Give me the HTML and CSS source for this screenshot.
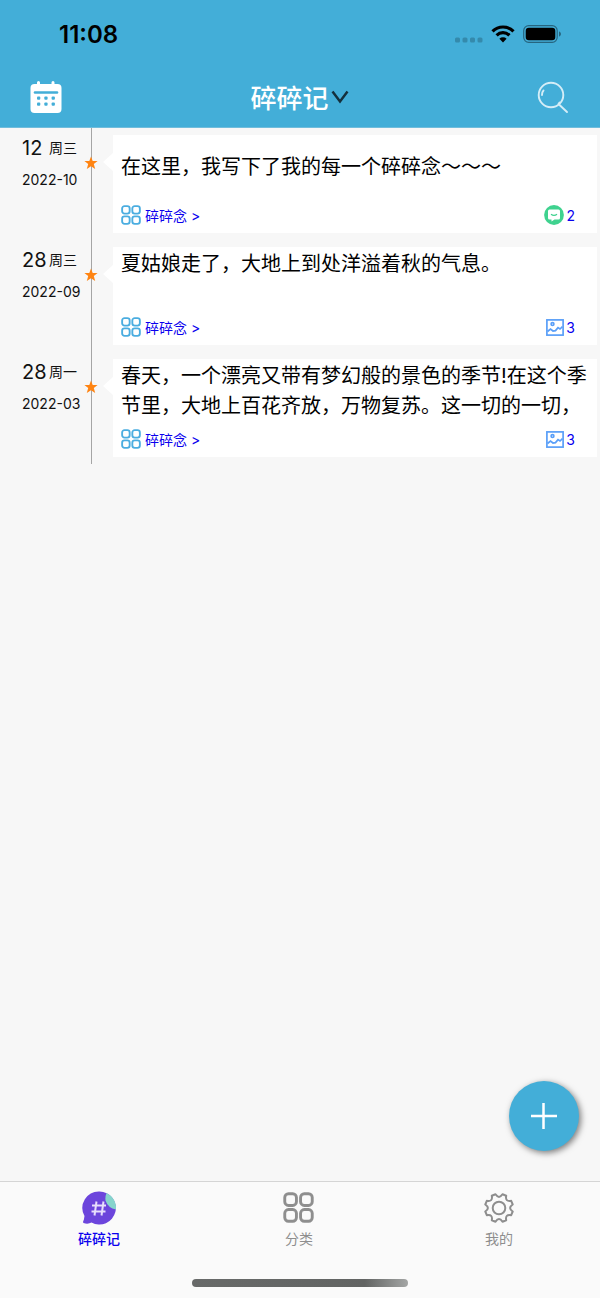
FILE: index.html
```html
<!DOCTYPE html>
<html lang="zh-CN">
<head>
<meta charset="utf-8">
<meta name="viewport" content="width=device-width, initial-scale=1">
<title>碎碎记</title>
<link rel="stylesheet" href="styles.css">
</head>
<body>
<svg class="sprite" aria-hidden="true">
  <symbol id="grid" viewBox="0 0 30 30"><g fill="none" stroke="currentColor" stroke-width="2.800"><rect x="1.700" y="1.700" width="11.300" height="11.300" rx="3.600"/><rect x="17" y="1.700" width="11.300" height="11.300" rx="3.600"/><rect x="1.700" y="17" width="11.300" height="11.300" rx="3.600"/><rect x="17" y="17" width="11.300" height="11.300" rx="3.600"/></g></symbol>
  <symbol id="star" viewBox="0 0 14 14"><path fill="#ff8412" d="M7 .5l1.700 4.400 4.900.2-3.800 3 1.400 4.900-4.200-2.700L2.800 13l1.400-4.900-3.800-3 4.900-.2z"/></symbol>
  <symbol id="photo" viewBox="0 0 18 17"><g fill="none" stroke="#5a9ff8" stroke-width="1.700"><rect x=".9" y=".9" width="16.200" height="15.200"/><circle cx="6.500" cy="5" r="1.400"/><path d="M1.500 12.500l3-2.500 2.500 2 2.500-.4 2.500-3 2 1.400 2.500-2.400"/></g></symbol>
</svg>
<div class="app">
  <header class="header">
    <div class="status">
      <time class="clock">11:08</time>
      <div class="signals">
        <svg width="28" height="6" viewBox="0 0 28 6" fill="#348aac"><rect x="0" y=".5" width="5" height="5" rx="1.500"/><rect x="7.500" y=".5" width="5" height="5" rx="1.500"/><rect x="15" y=".5" width="5" height="5" rx="1.500"/><rect x="22.500" y=".5" width="5" height="5" rx="1.500"/></svg>
        <svg width="24" height="18" viewBox="0 0 24 18"><g fill="none" stroke="#000" stroke-width="3.200"><path d="M1.500 6.300a15 15 0 0 1 21 0"/><path d="M5.600 10.300a9.200 9.200 0 0 1 12.800 0"/></g><path d="M12 17.500l-3.600-3.700a5.200 5.200 0 0 1 7.200 0z"/></svg>
        <svg width="38" height="18" viewBox="0 0 38 18"><rect x=".7" y=".7" width="33.500" height="16.600" rx="5" fill="none" stroke="#26657f" stroke-width="1.200"/><rect x="2.700" y="2.700" width="29.600" height="12.600" rx="3.200"/><path fill="#26657f" d="M36 6.300q2 1 2 2.700t-2 2.700z"/></svg>
      </div>
    </div>
    <div class="navbar">
      <button class="icon-button" aria-label="日历">
        <svg width="32" height="34" viewBox="0 0 32 34"><rect x=".5" y="4" width="31" height="29" rx="4" fill="#fff"/><path d="M8.500 2.500v4M23 2.500v4" stroke="#fff" stroke-width="3" stroke-linecap="round"/><path d="M5 12.500h22" stroke="#43aed8" stroke-width="2.600" stroke-linecap="round"/><g fill="#43aed8"><rect x="7" y="16.500" width="3.300" height="3.300" rx="1"/><rect x="14.300" y="16.500" width="3.300" height="3.300" rx="1"/><rect x="21.600" y="16.500" width="3.300" height="3.300" rx="1"/><rect x="7" y="22.500" width="3.300" height="3.300" rx="1"/><rect x="14.300" y="22.500" width="3.300" height="3.300" rx="1"/><rect x="21.600" y="22.500" width="3.300" height="3.300" rx="1"/></g></svg>
      </button>
      <button class="title">碎碎记<svg width="18" height="14" viewBox="0 0 18 14"><path d="M1.500 1.500L9 11.500l7.500-10" fill="none" stroke="#14303c" stroke-width="2.500"/></svg></button>
      <button class="icon-button" aria-label="搜索">
        <svg width="32" height="34" viewBox="0 0 32 34" fill="none" stroke="#d4edf7" stroke-width="1.900" stroke-linecap="round"><circle cx="14" cy="15" r="12.300"/><path d="M21.500 24l8.500 8M5 15q0-3 1.500-4.500M21.500 24l1-1.500"/></svg>
      </button>
    </div>
  </header>
  <main class="content">
    <ol class="timeline">
      <li class="entry">
        <time class="date"><span class="day">12</span><span class="weekday">周三</span><span class="month">2022-10</span></time>
        <div class="axis"><svg class="star"><use href="#star"/></svg></div>
        <article class="card">
          <div class="body middle"><p>在这里，我写下了我的每一个碎碎念～～～</p></div>
          <footer class="meta">
            <a class="category" href="#"><svg class="grid-icon"><use href="#grid"/></svg>碎碎念 &gt;</a>
            <a class="count" href="#" aria-label="2 条评论"><svg width="20" height="20" viewBox="0 0 20 20"><circle cx="10" cy="10" r="9.900" fill="#3fd28f"/><path fill="#fff" d="M5.500 4.500h9a1.500 1.500 0 0 1 1.500 1.500v7a1.500 1.500 0 0 1-1.500 1.500H10.500L7.500 16.500v-2h-2A1.500 1.500 0 0 1 4 13V6a1.500 1.500 0 0 1 1.500-1.500z"/><path d="M7 9.300q3 2.300 6 0" fill="none" stroke="#3fd28f" stroke-width="1.300"/></svg>2</a>
          </footer>
        </article>
      </li>
      <li class="entry">
        <time class="date"><span class="day">28</span><span class="weekday">周三</span><span class="month">2022-09</span></time>
        <div class="axis"><svg class="star"><use href="#star"/></svg></div>
        <article class="card">
          <div class="body"><p>夏姑娘走了，大地上到处洋溢着秋的气息。</p></div>
          <footer class="meta">
            <a class="category" href="#"><svg class="grid-icon"><use href="#grid"/></svg>碎碎念 &gt;</a>
            <a class="count" href="#" aria-label="3 张图片"><svg class="photo"><use href="#photo"/></svg>3</a>
          </footer>
        </article>
      </li>
      <li class="entry">
        <time class="date"><span class="day">28</span><span class="weekday">周一</span><span class="month">2022-03</span></time>
        <div class="axis"><svg class="star"><use href="#star"/></svg></div>
        <article class="card">
          <div class="body"><p>春天，一个漂亮又带有梦幻般的景色的季节!在这个季节里，大地上百花齐放，万物复苏。这一切的一切，</p></div>
          <footer class="meta">
            <a class="category" href="#"><svg class="grid-icon"><use href="#grid"/></svg>碎碎念 &gt;</a>
            <a class="count" href="#" aria-label="3 张图片"><svg class="photo"><use href="#photo"/></svg>3</a>
          </footer>
        </article>
      </li>
    </ol>
    <button class="add" aria-label="新建"><svg width="26" height="26" viewBox="0 0 26 26"><path d="M12.500 0v26M0 13h26" stroke="#fff" stroke-width="2.500"/></svg></button>
  </main>
  <div class="bottom">
    <nav class="tabs">
      <a class="tab active" href="#"><svg width="34" height="34" viewBox="0 0 34 34"><path fill="#6c45dc" d="M17.500.5a16.500 16.500 0 1 1-8 31Q6 33.500 1.500 32q-1-1 .3-3l.7-4A16.500 16.500 0 0 1 17.500.5z"/><path fill="#86d4cc" d="M24.500 2a16.500 16.500 0 0 1 9.500 16.500Q26 17 23.500 9.500q-.5-4 1-7.500z"/><path d="M14.500 10.500l-2 14M21.500 10.500l-2 14M10 14.500h14M9.500 20.500h14" fill="none" stroke="#e7defc" stroke-width="2"/></svg>碎碎记</a>
      <a class="tab" href="#"><svg width="34" height="34" viewBox="0 0 34 34"><use href="#grid" x="1" y="1" width="31" height="31"/></svg>分类</a>
      <a class="tab" href="#"><svg width="34" height="34" viewBox="0 0 34 34" fill="none" stroke="#8e8e8e" stroke-width="2"><path stroke-linejoin="round" d="M13.500 3.300Q17 8.500 20.500 3.300L24.200 4.800Q23 11 29.200 9.800L30.700 13.500Q25.500 17 30.700 20.500L29.200 24.200Q23 23 24.200 29.200L20.500 30.700Q17 25.500 13.500 30.700L9.800 29.200Q11 23 4.800 24.200L3.300 20.500Q8.500 17 3.300 13.500L4.800 9.800Q11 11 9.800 4.800Z"/><circle cx="17" cy="17" r="6.300"/></svg>我的</a>
    </nav>
    <div class="home"></div>
  </div>
</div>
</body>
</html>
```

FILE: styles.css
```css
* { box-sizing: border-box; }
body {
  margin: 0;
  background: #f7f7f7;
  color: #111;
  font-family: Inter, "Noto Sans CJK SC", sans-serif;
}
button { border: 0; padding: 0; background: none; font: inherit; color: inherit; }
a { text-decoration: none; color: #0a00ee; }
svg { display: block; flex: none; }
.sprite { position: absolute; width: 0; height: 0; }
.app { min-height: 100vh; display: flex; flex-direction: column; }

.header { background: #43aed8; border-bottom: 1px solid #71bddc; }
.status {
  display: flex;
  justify-content: space-between;
  align-items: center;
  height: 68px;
  padding: 0 39px 0 59px;
}
.clock { font-size: 24px; font-weight: 600; color: #000; }
.signals { display: flex; align-items: center; gap: 8px; }
.signals svg:first-child { margin-top: 12px; }
.navbar {
  display: flex;
  justify-content: space-between;
  align-items: center;
  height: 59px;
  padding: 0 31px 2px 30px;
}
.title {
  display: flex;
  align-items: center;
  gap: 2px;
  color: #fff;
  font-size: 26px;
  font-weight: 500;
}

.content { flex: 1; position: relative; }
.timeline { margin: 0; padding: 0; list-style: none; }
.entry {
  display: grid;
  grid-template-columns: 82px 18px 1fr;
  min-height: 112px;
  padding-right: 3px;
}
.date {
  display: grid;
  grid-template-columns: 27px 1fr;
  align-content: start;
  padding: 4px 0 0 22px;
  font-size: 14px;
  line-height: 32px;
}
.day { font-size: 20px; }
.month { grid-column: 1 / -1; }
.axis {
  display: flex;
  justify-content: center;
  align-items: flex-start;
  padding-top: 28px;
  background: linear-gradient(#a5a5a5, #a5a5a5) center / 1px 100% no-repeat;
}
.star { width: 14px; height: 14px; }
.card {
  position: relative;
  margin: 7px 0 7px 13px;
  padding: 0 8px;
  background: #fff;
}
.card::before {
  content: "";
  position: absolute;
  left: -10px;
  top: 18px;
  border: solid transparent;
  border-width: 9px 10px 9px 0;
  border-right-color: #fff;
}
.body {
  display: flex;
  height: 62px;
  padding-top: 2px;
  overflow: hidden;
  font-size: 20px;
  line-height: 30px;
  color: #000;
}
.body p { margin: 0; }
.middle { align-items: center; }
.meta {
  display: flex;
  justify-content: space-between;
  align-items: center;
  height: 36px;
  padding-right: 14px;
  font-size: 14px;
}
.category { display: flex; align-items: center; gap: 4px; }
.count { display: flex; align-items: center; gap: 2px; }
.grid-icon { width: 20px; height: 20px; color: #4bade0; }
.photo { width: 18px; height: 17px; }
.add {
  position: absolute;
  right: 21px;
  bottom: 30px;
  display: grid;
  place-items: center;
  width: 70px;
  height: 70px;
  border-radius: 50%;
  background: #43aed8;
  box-shadow: 2px 2px 6px rgba(0, 0, 0, .5);
}

.bottom { background: #fafafa; border-top: 1px solid #d5d5d5; }
.tabs { display: grid; grid-template-columns: repeat(3, 1fr); }
.tab {
  display: flex;
  flex-direction: column;
  align-items: center;
  gap: 4px;
  padding: 9px 2px 0 0;
  color: #8e8e8e;
  font-size: 14px;
  line-height: 20px;
}
.active { color: #0a00ee; font-weight: 500; }
.home {
  width: 36%;
  height: 8px;
  margin: 30px auto 11px;
  border-radius: 4px;
  background: linear-gradient(90deg, #686a69, #626463 80%, #a4a6a5);
}
```
